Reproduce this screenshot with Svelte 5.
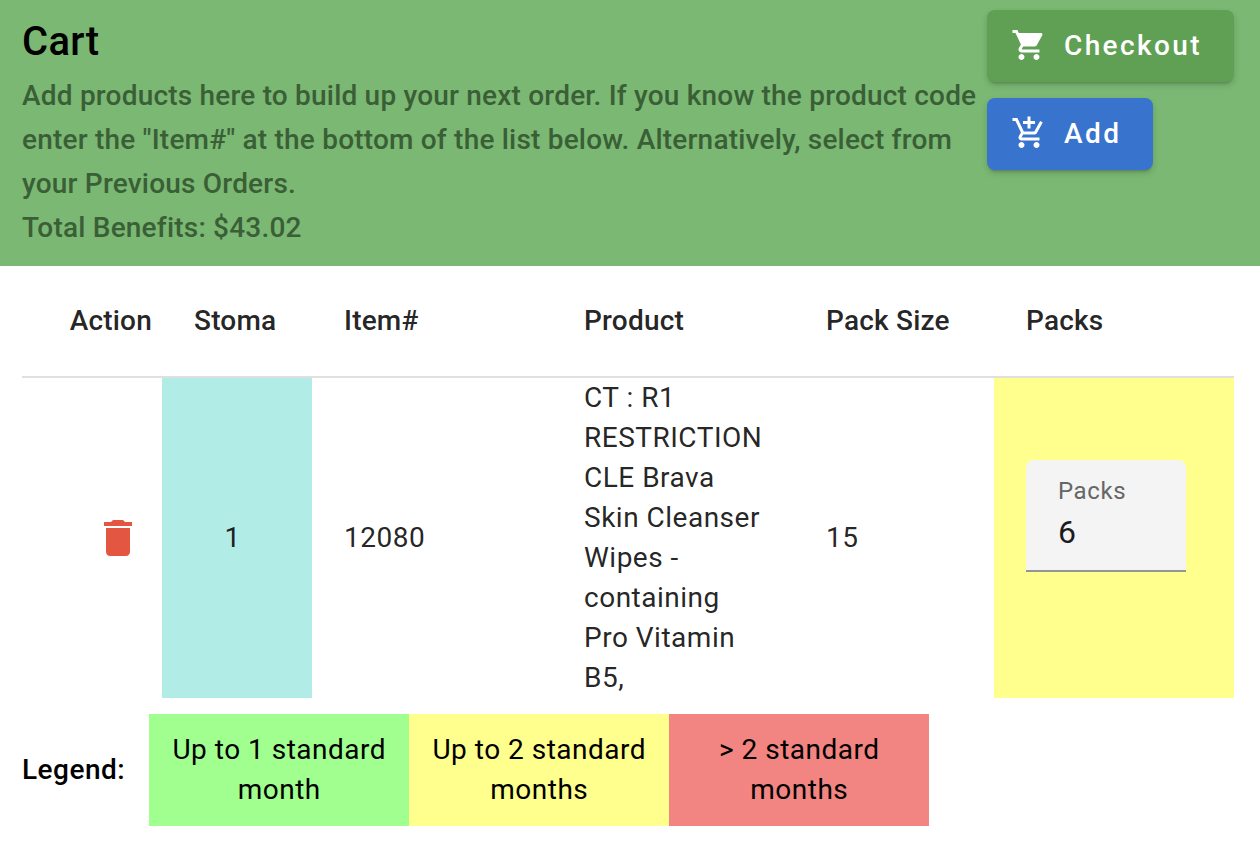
<script lang="ts">
    const legend = [
        { label: 'Up to 1 standard month', color: '#a0ff8f' },
        { label: 'Up to 2 standard months', color: '#ffff8d' },
        { label: '> 2 standard months', color: '#f28582' },
    ];
</script>

<div class="page">
    <header class="banner">
        <div class="intro">
            <h1>Cart</h1>
            <p>
                Add products here to build up your next order. If you know the product code
                enter the "Item#" at the bottom of the list below. Alternatively, select from
                your Previous Orders.
            </p>
            <p>Total Benefits: $43.02</p>
        </div>
        <div class="actions">
            <button class="btn checkout">
                <svg viewBox="0 0 24 24" aria-hidden="true">
                    <path d="M7 18c-1.1 0-1.99.9-1.99 2S5.9 22 7 22s2-.9 2-2-.9-2-2-2zM1 2v2h2l3.6 7.59-1.35 2.45c-.16.28-.25.61-.25.96 0 1.1.9 2 2 2h12v-2H7.42c-.14 0-.25-.11-.25-.25l.03-.12.9-1.63h7.45c.75 0 1.41-.41 1.75-1.03l3.58-6.49c.08-.14.12-.31.12-.48 0-.55-.45-1-1-1H5.21l-.94-2H1zm16 16c-1.1 0-1.99.9-1.99 2s.89 2 1.99 2 2-.9 2-2-.9-2-2-2z" />
                </svg>
                Checkout
            </button>
            <button class="btn add">
                <svg viewBox="0 0 24 24" aria-hidden="true">
                    <path d="M11 9h2V6h3V4h-3V1h-2v3H8v2h3v3zm-4 9c-1.1 0-1.99.9-1.99 2S5.9 22 7 22s2-.9 2-2-.9-2-2-2zm10 0c-1.1 0-1.99.9-1.99 2s.89 2 1.99 2 2-.9 2-2-.9-2-2-2zm-9.83-3.25l.03-.12.9-1.63h7.45c.75 0 1.41-.41 1.75-1.03l3.86-7.01L19.42 4h-.01l-1.1 2-2.76 5H8.53l-.13-.27L6.16 6l-.95-2-.94-2H1v2h2l3.6 7.59-1.35 2.45c-.16.28-.25.61-.25.96 0 1.1.9 2 2 2h12v-2H7.42c-.13 0-.25-.11-.25-.25z" />
                </svg>
                Add
            </button>
        </div>
    </header>

    <table class="cart">
        <colgroup>
            <col style="width: 140px" />
            <col style="width: 150px" />
            <col style="width: 240px" />
            <col style="width: 242px" />
            <col style="width: 200px" />
            <col style="width: 240px" />
        </colgroup>
        <thead>
            <tr>
                <th class="action-head">Action</th>
                <th>Stoma</th>
                <th>Item#</th>
                <th>Product</th>
                <th>Pack Size</th>
                <th>Packs</th>
            </tr>
        </thead>
        <tbody>
            <tr>
                <td class="action-cell">
                    <svg class="trash" viewBox="0 0 24 24" aria-hidden="true">
                        <path d="M6 19c0 1.1.9 2 2 2h8c1.1 0 2-.9 2-2V7H6v12zM19 4h-3.5l-1-1h-5l-1 1H5v2h14V4z" />
                    </svg>
                </td>
                <td class="stoma">1</td>
                <td>12080</td>
                <td class="product">
                    <div class="product-text">
                        CT : R1 RESTRICTION CLE Brava Skin Cleanser Wipes - containing Pro Vitamin B5,
                    </div>
                </td>
                <td>15</td>
                <td class="packs">
                    <div class="field">
                        <span class="field-label">Packs</span>
                        <span class="field-value">6</span>
                    </div>
                </td>
            </tr>
        </tbody>
    </table>

    <div class="legend">
        <strong>Legend:</strong>
        <div class="legend-items">
            {#each legend as item}
                <div class="legend-item" style="background: {item.color}">{item.label}</div>
            {/each}
        </div>
    </div>
</div>

<style>
    :global(body) {
        margin: 0;
        background: #fff;
    }

    .page {
        font-family: Roboto, 'Liberation Sans', sans-serif;
        color: rgba(0, 0, 0, 0.87);
    }

    .banner {
        display: flex;
        justify-content: space-between;
        background: #7ab873;
        padding: 10px 26px 16px 22px;
        height: 240px;
    }

    .intro {
        width: 960px;
    }

    h1 {
        margin: 0;
        font-size: 40px;
        font-weight: 500;
        line-height: 64px;
        letter-spacing: 0.3px;
        color: #000;
    }

    .intro p {
        margin: 0;
        font-size: 28px;
        font-weight: 500;
        line-height: 44px;
        letter-spacing: 0.2px;
        color: #3a5f36;
    }

    .actions {
        display: flex;
        flex-direction: column;
        align-items: flex-start;
        gap: 16px;
        width: 247px;
    }

    .btn {
        display: flex;
        align-items: center;
        gap: 17px;
        box-sizing: border-box;
        height: 72px;
        padding: 0 32px 2px 24px;
        border: none;
        border-radius: 8px;
        color: #fff;
        font-family: inherit;
        font-size: 28px;
        font-weight: 500;
        letter-spacing: 2.4px;
        box-shadow: 0 3px 3px -2px rgba(0, 0, 0, 0.2), 0 3px 6px rgba(0, 0, 0, 0.15);
    }

    .btn svg {
        width: 36px;
        height: 36px;
        fill: #fff;
    }

    .checkout {
        width: 247px;
        background: #5fa054;
    }

    .add {
        background: #3873cd;
    }

    .cart {
        width: 1212px;
        margin-left: 22px;
        border-collapse: collapse;
        table-layout: fixed;
        font-size: 28px;
        letter-spacing: 0.5px;
    }

    th {
        height: 111px;
        padding: 0 32px 2px;
        box-sizing: border-box;
        text-align: left;
        font-weight: 500;
        letter-spacing: 0.2px;
        border-bottom: 2px solid #e0e0e0;
    }

    .action-head {
        padding: 0 10px 2px 0;
        text-align: right;
    }

    td {
        box-sizing: border-box;
        height: 320px;
        padding: 0 32px 2px;
        vertical-align: middle;
    }

    .action-cell {
        padding: 0 20px 0 0;
        text-align: right;
    }

    .trash {
        display: inline-block;
        vertical-align: middle;
        width: 48px;
        height: 48px;
        fill: #e35641;
    }

    .stoma {
        padding: 0 9px 2px 0;
        text-align: center;
        background: #b2ece6;
    }

    .product {
        padding-bottom: 0;
    }

    .product-text {
        height: 320px;
        overflow: hidden;
        line-height: 40px;
    }

    .packs {
        padding-bottom: 44px;
        background: #ffff8d;
    }

    .field {
        display: flex;
        flex-direction: column;
        box-sizing: border-box;
        width: 160px;
        height: 112px;
        padding: 17px 32px 0;
        background: #f4f4f4;
        border-bottom: 2px solid #949494;
        border-radius: 8px 8px 0 0;
    }

    .field-label {
        font-size: 24px;
        line-height: 28px;
        letter-spacing: 0.6px;
        color: #666;
    }

    .field-value {
        margin-top: 5px;
        font-size: 32px;
        line-height: 44px;
        color: #1c1c1c;
    }

    .legend {
        display: flex;
        align-items: center;
        gap: 24px;
        margin: 16px 0 0 22px;
        font-size: 28px;
        color: #000;
    }

    .legend strong {
        margin-bottom: 2px;
        font-weight: 500;
        letter-spacing: 0.5px;
    }

    .legend-items {
        display: flex;
    }

    .legend-item {
        box-sizing: border-box;
        width: 260px;
        padding: 16px 16px;
        text-align: center;
        line-height: 40px;
        letter-spacing: 0.5px;
    }
</style>
